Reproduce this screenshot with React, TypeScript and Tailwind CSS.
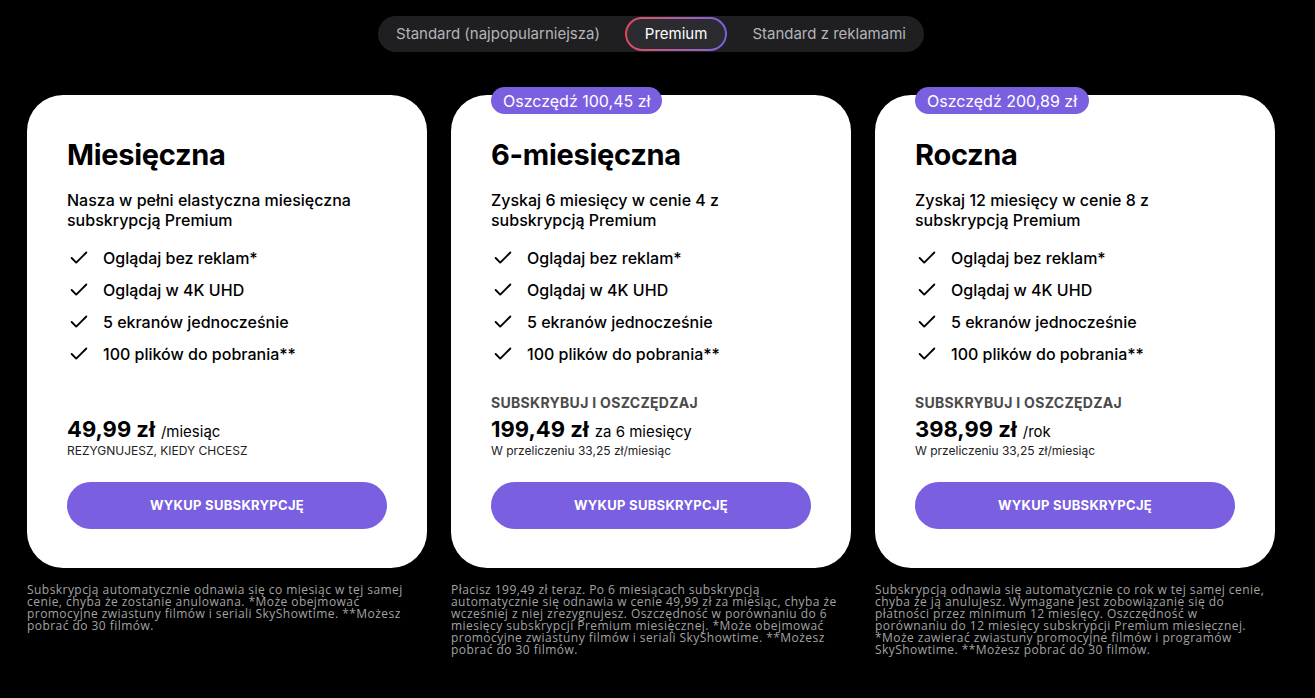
import React from 'react';
import { Check } from 'lucide-react';

interface Plan {
    title: string;
    description: string;
    badge?: string;
    label?: string;
    price: string;
    period: string;
    note: string;
    footnote: string;
}

const features = [
    'Oglądaj bez reklam*',
    'Oglądaj w 4K UHD',
    '5 ekranów jednocześnie',
    '100 plików do pobrania**',
];

const plans: Plan[] = [
    {
        title: 'Miesięczna',
        description: 'Nasza w pełni elastyczna miesięczna subskrypcją Premium',
        price: '49,99 zł',
        period: '/miesiąc',
        note: 'REZYGNUJESZ, KIEDY CHCESZ',
        footnote:
            'Subskrypcją automatycznie odnawia się co miesiąc w tej samej cenie, chyba że zostanie anulowana. *Może obejmować promocyjne zwiastuny filmów i seriali SkyShowtime. **Możesz pobrać do 30 filmów.',
    },
    {
        title: '6-miesięczna',
        description: 'Zyskaj 6 miesięcy w cenie 4 z subskrypcją Premium',
        badge: 'Oszczędź 100,45 zł',
        label: 'SUBSKRYBUJ I OSZCZĘDZAJ',
        price: '199,49 zł',
        period: 'za 6 miesięcy',
        note: 'W przeliczeniu 33,25 zł/miesiąc',
        footnote:
            'Płacisz 199,49 zł teraz. Po 6 miesiącach subskrypcją automatycznie się odnawia w cenie 49,99 zł za miesiąc, chyba że wcześniej z niej zrezygnujesz. Oszczędność w porównaniu do 6 miesięcy subskrypcji Premium miesięcznej. *Może obejmować promocyjne zwiastuny filmów i seriali SkyShowtime. **Możesz pobrać do 30 filmów.',
    },
    {
        title: 'Roczna',
        description: 'Zyskaj 12 miesięcy w cenie 8 z subskrypcją Premium',
        badge: 'Oszczędź 200,89 zł',
        label: 'SUBSKRYBUJ I OSZCZĘDZAJ',
        price: '398,99 zł',
        period: '/rok',
        note: 'W przeliczeniu 33,25 zł/miesiąc',
        footnote:
            'Subskrypcją odnawia się automatycznie co rok w tej samej cenie, chyba że ją anulujesz. Wymagane jest zobowiązanie się do płatności przez minimum 12 miesięcy. Oszczędność w porównaniu do 12 miesięcy subskrypcji Premium miesięcznej. *Może zawierać zwiastuny promocyjne filmów i programów SkyShowtime. **Możesz pobrać do 30 filmów.',
    },
];

const PlanCard: React.FC<{ plan: Plan }> = ({ plan }) => (
    <div className="w-[400px] flex flex-col">
        <div className="relative h-[473px] bg-white rounded-[36px] px-10 pt-[42px] pb-[39px] flex flex-col text-black">
            {plan.badge && (
                <div className="absolute left-10 -top-2 h-[27px] px-3 flex items-center rounded-full bg-[#7a5fe0] text-white text-[16px]">
                    {plan.badge}
                </div>
            )}
            <h2 className="text-[29px] leading-9 font-bold tracking-[-0.3px]">{plan.title}</h2>
            <p className="mt-[17px] text-[16px] leading-5 font-medium pr-6">{plan.description}</p>
            <ul className="mt-4 flex flex-col gap-2">
                {features.map((f) => (
                    <li key={f} className="flex items-center gap-[13px] h-6 text-[16px] font-medium pl-[1px]">
                        <Check size={22} strokeWidth={2} />
                        <span>{f}</span>
                    </li>
                ))}
            </ul>
            <div className="mt-auto flex flex-col">
                {plan.label && (
                    <div className="mb-1 text-[14px] leading-5 font-bold text-[#4a4a4a] tracking-[0.3px]">{plan.label}</div>
                )}
                <div className="flex items-baseline gap-[6px] leading-6">
                    <span className="text-[22px] font-bold">{plan.price}</span>
                    <span className="text-[15px]">{plan.period}</span>
                </div>
                <div className="text-[12px] leading-[14px] text-[#222]">{plan.note}</div>
            </div>
            <button className="mt-6 h-[47px] w-full rounded-full bg-[#7a5fe0] text-white text-[13px] font-bold tracking-[0.3px]">
                WYKUP SUBSKRYPCJĘ
            </button>
        </div>
        <p className="mt-4 pr-1 text-[12px] leading-3 tracking-[0.45px] text-[#a3a3a3] font-['Open_Sans',sans-serif]">
            {plan.footnote}
        </p>
    </div>
);

export default function App() {
    return (
        <div className="min-h-[698px] w-full bg-black font-['Inter',sans-serif]">
            <div className="w-[1302px]">
                <div className="pt-4 flex justify-center">
                    <div className="h-9 flex items-center rounded-full bg-[#1f1f22] px-[1px] text-[15px] text-[#b4b4b8]">
                        <span className="px-[17px]">Standard (najpopularniejsza)</span>
                        <div className="mx-2 rounded-full p-[2px] bg-linear-to-r from-[#e2475a] to-[#7a5fe0]">
                            <div className="h-[30px] px-[18px] flex items-center rounded-full bg-[#2b2b30] text-white">
                                Premium
                            </div>
                        </div>
                        <span className="px-[17px]">Standard z reklamami</span>
                    </div>
                </div>
                <div className="mt-[43px] pl-[27px] flex gap-6">
                    {plans.map((p) => (
                        <PlanCard key={p.title} plan={p} />
                    ))}
                </div>
            </div>
        </div>
    );
}
